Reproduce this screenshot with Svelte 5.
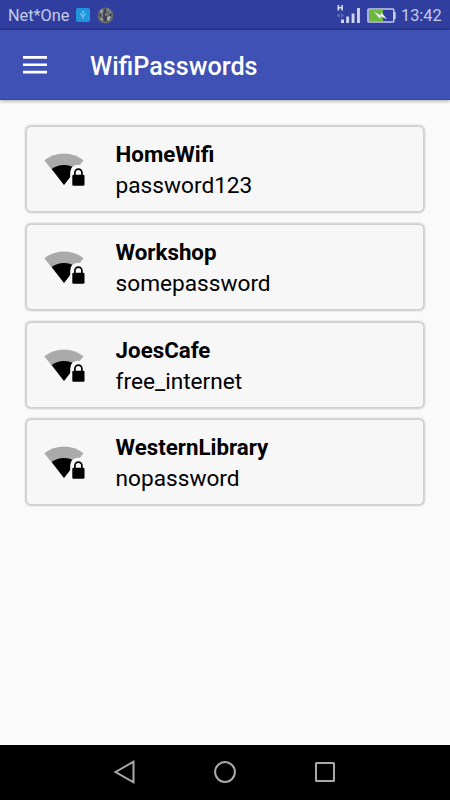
<script lang="ts">
	type Network = { ssid: string; password: string };

	const networks: Network[] = [
		{ ssid: "HomeWifi", password: "password123" },
		{ ssid: "Workshop", password: "somepassword" },
		{ ssid: "JoesCafe", password: "free_internet" },
		{ ssid: "WesternLibrary", password: "nopassword" },
	];
</script>

<div class="screen">
	<div class="status-bar">
		<span class="carrier">Net*One</span>
		<svg class="usb" width="14" height="14" viewBox="0 0 14 14" fill="none">
			<rect width="14" height="14" rx="2" fill="#2196dc" />
			<path
				d="M7 3v8M4.8 5v2L7 8.6 9.2 7V5M6.2 4 7 3l.8 1"
				stroke="#8ccbee"
				stroke-width="0.9"
			/>
		</svg>
		<svg class="avatar" width="17" height="17" viewBox="0 0 17 17">
			<circle cx="8.5" cy="8.5" r="8" fill="#62676c" />
			<path d="M3 4l2-2 1 2-2 3zM10 1.5l2 1-1 2zM12 4l2 1-1 2z" fill="#a5aaa7" />
			<path d="M7 3l2 2v3l2 3-3 4-2-5z" fill="#393e50" />
			<path d="M10 10l3-1 1 1-2 4-2-1zM3 11l2 0 1 3-2-1z" fill="#acacab" />
			<path d="M12 6l3 2-2 1zM2 7l2 1-1 2zM8 1l1 3-2-1z" fill="#303844" />
			<path d="M8 6l1 1-1 3zM5 7l1 1-1 2zM10 6l1 2-1 1z" fill="#a09a9a" />
		</svg>
		<span class="spacer"></span>
		<svg class="signal" width="24" height="21" viewBox="0 0 24 21">
			<path
				d="M2.3 2v5.5M6.1 2v5.5M2.3 4.7h3.8"
				fill="none"
				stroke="#e0e3f2"
				stroke-width="1.5"
			/>
			<path d="M.8 12.5 3.6 10v5zM8 12.5 5.1 10v5z" fill="#646fb7" />
			<path
				d="M5 16.5h3V20H5zM10.2 13.5h2.9V20h-2.9zM15.6 10.5h2.9V20h-2.9zM21 5h2.9v15H21z"
				fill="#d0d4eb"
			/>
		</svg>
		<svg class="battery" width="29" height="15" viewBox="0 0 29 15">
			<rect x="2" y="2" width="14" height="11" fill="#6db73f" />
			<rect
				x="1"
				y="1"
				width="25.8"
				height="13"
				rx="1"
				fill="none"
				stroke="#c5cae9"
				stroke-width="1.6"
			/>
			<path d="M27 4h1.7v7H27z" fill="#c5cae9" />
			<path d="M7 3.8 13.4 7 14.6 4.4 20 11.2 14 8.4l-1.2 2.4z" fill="#e5e8f5" />
		</svg>
		<span class="clock">13:42</span>
	</div>

	<header class="toolbar">
		<button type="button" class="menu-btn" aria-label="Open menu">
			<svg width="24" height="18" viewBox="0 0 24 18" fill="#fff">
				<path d="M0 0h24v2.7H0zM0 7.4h24v2.7H0zM0 14.8h24v2.7H0z" />
			</svg>
		</button>
		<h1>WifiPasswords</h1>
	</header>

	<main class="list">
		{#each networks as network (network.ssid)}
			<div class="card">
				<svg class="wifi" width="42" height="34" viewBox="0 0 42 34">
					<path d="M.3 8.2Q9 1.4 20 1.4t19.5 6.8L20 33z" fill="#aaa" />
					<path d="M7.7 17Q13.3 13 20 13t12.3 4L20 33z" />
					<path
						d="M26.2 34V20.5q.3-7.2 7.4-7.7 4.4-.2 8.4 4.2v17z"
						fill="#f7f7f7"
					/>
					<rect x="28.3" y="22.8" width="12.2" height="11" rx="1.3" />
					<path
						d="M30.9 24v-3.4a3.5 3.5 0 0 1 7 0V24"
						fill="none"
						stroke="#000"
						stroke-width="1.7"
					/>
				</svg>
				<div class="details">
					<span class="ssid">{network.ssid}</span>
					<span class="password">{network.password}</span>
				</div>
			</div>
		{/each}
	</main>

	<nav class="nav-bar">
		<svg width="24" height="26" viewBox="0 0 24 26">
			<path d="M2.5 13 20.5 2.7v20.6z" />
		</svg>
		<svg width="24" height="26" viewBox="0 0 24 26">
			<circle cx="12" cy="13" r="9.9" />
		</svg>
		<svg width="24" height="26" viewBox="0 0 24 26">
			<rect x="3" y="4" width="18" height="18" rx="0.5" />
		</svg>
	</nav>
</div>

<style>
	:global(body) {
		margin: 0;
	}

	.screen {
		width: 450px;
		height: 800px;
		display: flex;
		flex-direction: column;
		overflow: hidden;
		background: #fafafa;
		font-family: Roboto, sans-serif;
		color: #000;
	}

	.status-bar {
		flex: none;
		height: 30px;
		box-sizing: border-box;
		padding: 0 8px;
		display: flex;
		align-items: center;
		background: linear-gradient(#303f9f 27px, #2b388e);
		color: #c5cae9;
		font-size: 16.3px;
	}

	.carrier {
		width: 68px;
	}

	.avatar {
		margin-left: 7px;
	}

	.spacer {
		flex: 1;
	}

	.signal {
		margin: -3px 7px 0 0;
	}

	.battery {
		margin-right: 5px;
	}

	.clock {
		width: 41px;
	}

	.toolbar {
		flex: none;
		height: 70px;
		box-sizing: border-box;
		padding-left: 23px;
		display: flex;
		align-items: center;
		background: #3f51b5;
		border-bottom: 1px solid #2947ae;
		box-shadow: 0 1px 4px rgba(0, 0, 0, 0.35);
	}

	.menu-btn {
		display: flex;
		padding: 0;
		border: 0;
		background: none;
	}

	h1 {
		margin: 5px 0 0 43px;
		color: #fff;
		font-size: 25.2px;
		font-weight: 500;
		line-height: 30px;
	}

	.list {
		flex: 1;
		padding: 26px 26px 0;
		display: flex;
		flex-direction: column;
		gap: 11.75px;
	}

	.card {
		height: 86px;
		box-sizing: border-box;
		padding-left: 17px;
		display: flex;
		align-items: center;
		background: #f7f7f7;
		border: 1px solid #d0d0d0;
		border-radius: 5px;
		box-shadow: 0 0 2px 1px rgba(0, 0, 0, 0.2);
	}

	.wifi {
		flex: none;
	}

	.details {
		margin: 3px 0 0 29.6px;
		display: flex;
		flex-direction: column;
	}

	.ssid {
		font-size: 22.3px;
		font-weight: 700;
		line-height: 30px;
	}

	.password {
		font-size: 22.65px;
		line-height: 33px;
	}

	.nav-bar {
		flex: none;
		height: 55px;
		box-sizing: border-box;
		padding-bottom: 1px;
		display: flex;
		align-items: center;
		justify-content: center;
		gap: 76px;
		background: #000;
		fill: none;
		stroke: #aaa;
		stroke-width: 2;
	}
</style>
